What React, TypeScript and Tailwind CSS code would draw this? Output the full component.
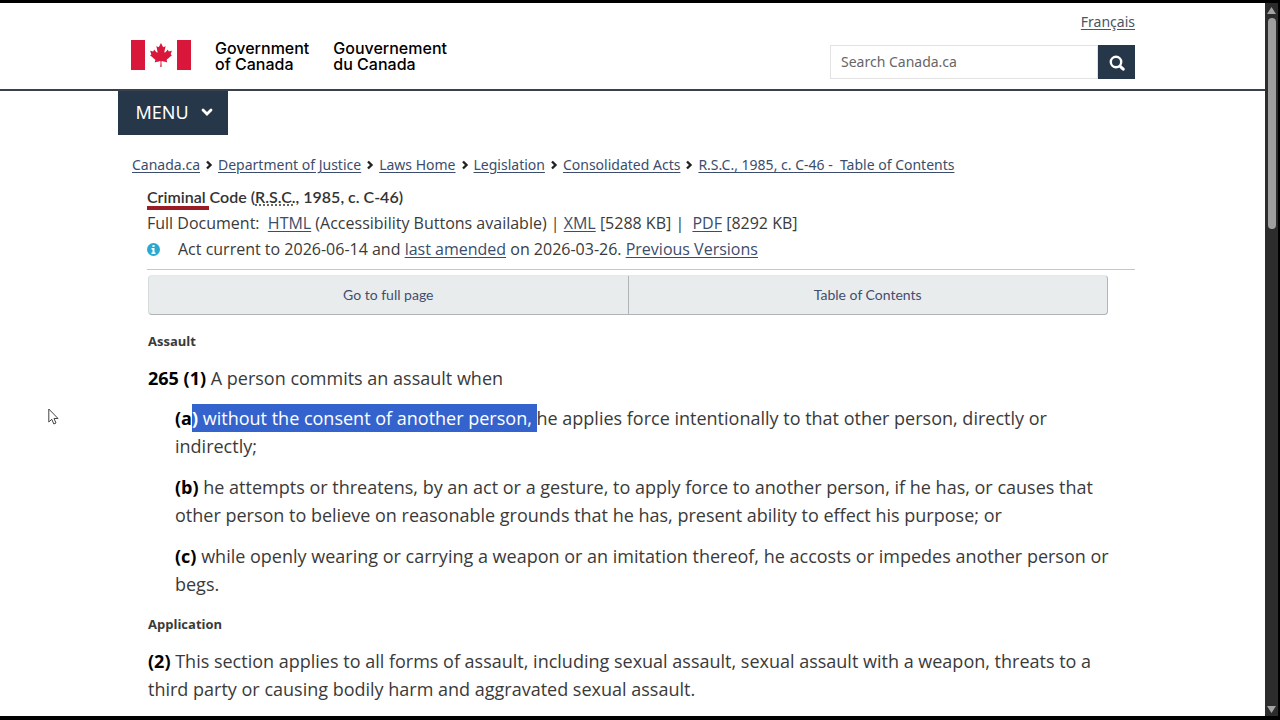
import { Fragment, type ReactNode } from "react";
import { FaCanadianMapleLeaf } from "react-icons/fa";

const crumbs = [
  "Canada.ca",
  "Department of Justice",
  "Laws Home",
  "Legislation",
  "Consolidated Acts",
  "R.S.C., 1985, c. C-46 -\u00a0 Table of Contents",
];

function Link({ children }: { children: ReactNode }) {
  return (
    <a href="#" className="text-[#3b4d6b] underline underline-offset-2">
      {children}
    </a>
  );
}

function Label({ children }: { children: ReactNode }) {
  return <strong className="font-bold text-black">{children}</strong>;
}

function Header() {
  return (
    <header className="border-b-2 border-[#38414d]">
      <div className="mx-auto flex h-[86px] max-w-[1005px] items-start justify-between">
        <a href="#" className="mt-[37px] ml-px flex items-start text-base leading-4 font-medium text-black">
          <span className="flex h-[30px] w-[60px] items-center justify-between text-[#d8173a]">
            <span className="h-full w-[14px] bg-[#d8173a]" />
            <FaCanadianMapleLeaf className="h-6 w-6" />
            <span className="h-full w-[14px] bg-[#d8173a]" />
          </span>
          <span className="ml-6 font-['Inter',sans-serif]">
            Government
            <br />
            of Canada
          </span>
          <span className="ml-6 font-['Inter',sans-serif]">
            Gouvernement
            <br />
            du Canada
          </span>
        </a>
        <div className="flex flex-col items-end">
          <a href="#" className="mt-[9px] text-sm leading-5 text-[#4b5563] underline underline-offset-2">
            Français
          </a>
          <form className="mt-[13px] flex h-[34px] w-[305px]">
            <input
              aria-label="Search Canada.ca"
              placeholder="Search Canada.ca"
              className="min-w-0 flex-1 border border-[#e2e2e2] px-[10px] text-sm placeholder:text-[#666]"
            />
            <button type="button" aria-label="Search" className="flex w-[37px] items-center justify-center bg-[#26374a] text-white">
              <svg viewBox="0 0 16 16" className="mt-px h-4 w-4" fill="none" stroke="currentColor" strokeLinecap="round">
                <circle cx="7" cy="7" r="5.2" strokeWidth="2.4" />
                <path d="M11.2 11.4 14.2 14.2" strokeWidth="3" />
              </svg>
            </button>
          </form>
        </div>
      </div>
    </header>
  );
}

function Scrollbar() {
  return (
    <div className="mr-[2px] flex w-[13px] shrink-0 flex-col items-center bg-[#2c2c2c] py-[3px]" aria-hidden="true">
      <svg viewBox="0 0 9 7" className="mt-px h-[7px] w-[9px]" fill="#a3a3a3">
        <path d="M4.5 0 9 7H0z" />
      </svg>
      <div className="mt-1 h-[211px] w-2 rounded-full bg-[#9f9f9f]" />
      <svg viewBox="0 0 9 7" className="mt-auto h-[7px] w-[9px]" fill="#a3a3a3">
        <path d="M0 0h9L4.5 7z" />
      </svg>
    </div>
  );
}

export default function App() {
  return (
    <div className="relative flex min-h-screen bg-black pt-[3px] pb-1 font-['Noto_Sans',sans-serif] text-[#3a3a3a]">
      <div className="min-w-0 flex-1 bg-white">
        <Header />
        <div className="mx-auto max-w-[1005px]">
          <button
            type="button"
            className="-ml-3 flex h-11 w-[110px] items-center justify-center gap-3 bg-[#26374a] pb-[2px] pl-[2px] text-lg text-white"
          >
            MENU
            <svg viewBox="0 0 12 12" className="h-3 w-3" fill="none" stroke="currentColor" strokeWidth="2.8" strokeLinecap="round">
              <path d="M2 4l4 4 4-4" />
            </svg>
          </button>

          <nav aria-label="Breadcrumb" className="mt-5 ml-[2px] flex items-center text-sm leading-5">
            {crumbs.map((crumb, index) => (
              <Fragment key={crumb}>
                {index > 0 && (
                  <svg
                    viewBox="0 0 8 10"
                    className="mx-[5px] h-[10px] w-2 shrink-0"
                    fill="none"
                    stroke="#222"
                    strokeWidth="2.4"
                  >
                    <path d="M2 1.5 5.5 5 2 8.500" />
                  </svg>
                )}
                <Link>{crumb}</Link>
              </Fragment>
            ))}
          </nav>

          <main>
            <section className="ml-[17px] border-b border-[#d0d080] pt-[10px] pb-2 font-['Open_Sans',sans-serif] text-base leading-6">
              <h1 className="font-['Lato',sans-serif] text-base leading-6 font-semibold text-[#333]">
                <span className="relative">
                  Criminal
                  <span className="absolute -right-[3px] -bottom-1 left-0 h-1 bg-[#9c1c25]" />
                </span>{" "}
                Code (
                <abbr className="underline decoration-dotted underline-offset-2">R.S.C.</abbr>, 1985, c. C-46)
              </h1>
              <p className="mt-[2px]">
                Full Document:&nbsp; <Link>HTML</Link> (Accessibility Buttons available) | <Link>XML</Link> [5288 KB] |&nbsp;{" "}
                <Link>PDF</Link> [8292 KB]
              </p>
              <p className="mt-[2px] flex items-center">
                <svg viewBox="0 0 13 13" className="mr-[18px] h-[13px] w-[13px]">
                  <circle cx="6.5" cy="6.5" r="6.5" fill="#29a9d0" />
                  <path d="M5.5 2h2v2h-2zM4.5 5h3v4.5h1V11h-4V9.500h1v-3h-1z" fill="#fff" />
                </svg>
                <span>
                  Act current to 2026-06-14 and <Link>last amended</Link> on 2026-03-26. <Link>Previous Versions</Link>
                </span>
              </p>
            </section>

            <div className="mt-[5px] mr-[27px] ml-[18px] flex h-10 divide-x divide-[#b0b5b8] rounded border border-t-[#e3e7e8] border-r-[#b0b5b8] border-b-[#b0b5b8] border-l-[#d5dadb] bg-[#e8ecec] font-['Lato',sans-serif] text-sm text-[#434d70]">
              <button type="button" className="flex-1">Go to full page</button>
              <button type="button" className="flex-1">Table of Contents</button>
            </div>

            <article className="mr-5 ml-[18px] font-['Open_Sans',sans-serif] text-lg leading-7">
              <h2 className="mt-4 text-[13px] leading-5 font-bold">Assault</h2>
              <p className="mt-[13px]">
                <Label>265 (1)</Label> A person commits an assault when
              </p>
              <div className="mt-3 ml-[27px] flex flex-col gap-[13px]">
                <p>
                  <Label>(a</Label>
                  <span className="bg-[#3563cd] py-[2px] text-white">
                    <strong className="font-bold">)</strong> without the consent of another person,{" "}
                  </span>
                  he applies force intentionally to that other person, directly or indirectly;
                </p>
                <p>
                  <Label>(b)</Label> he attempts or threatens, by an act or a gesture, to apply force to another person, if he
                  has, or causes that other person to believe on reasonable grounds that he has, present ability to effect his
                  purpose; or
                </p>
                <p>
                  <Label>(c)</Label> while openly wearing or carrying a weapon or an imitation thereof, he accosts or impedes
                  another person or begs.
                </p>
              </div>
              <h2 className="mt-4 text-[13px] leading-5 font-bold">Application</h2>
              <p className="mt-[13px]">
                <Label>(2)</Label> This section applies to all forms of assault, including sexual assault, sexual assault with a
                weapon, threats to a third party or causing bodily harm and aggravated sexual assault.
              </p>
            </article>
          </main>
        </div>
      </div>
      <Scrollbar />
      <svg viewBox="0 0 12 18" className="absolute top-[408px] left-12 h-[18px] w-3" fill="#fff" stroke="#444" strokeWidth="1">
        <path d="M.8 1v13l3-2.700 2 4.700 2.200-1-2-4.500h4z" />
      </svg>
    </div>
  );
}
